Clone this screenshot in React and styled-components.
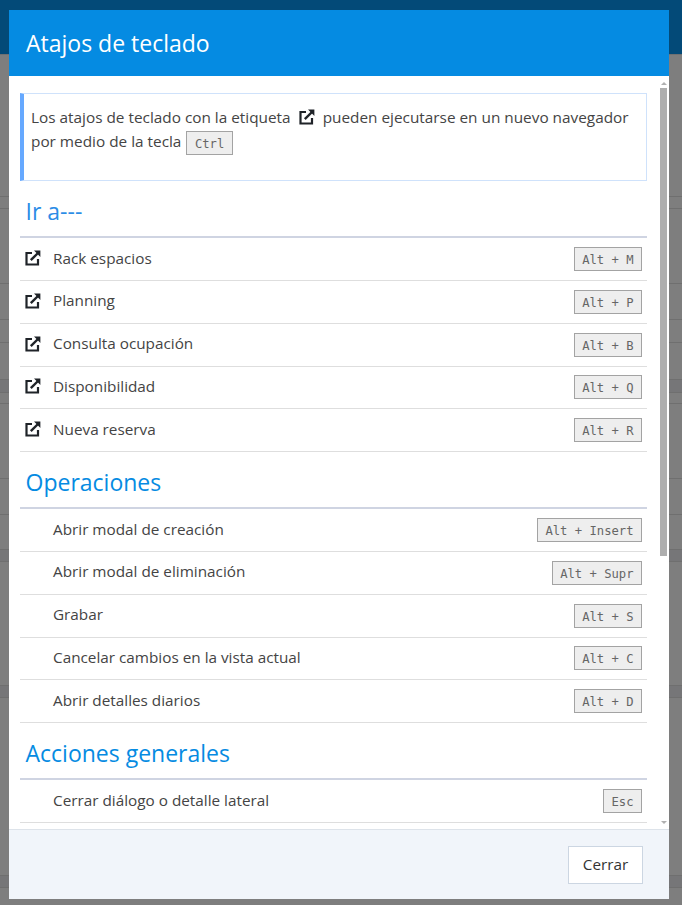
import styled, { createGlobalStyle } from "styled-components";

const GlobalStyle = createGlobalStyle`
  * {
    box-sizing: border-box;
  }

  html,
  body {
    margin: 0;
    height: 100%;
    background: #7e7e7e;
    overflow: hidden;
    font-family: "Open Sans", "Noto Sans", sans-serif;
  }
`;

const Page = styled.div`
  position: relative;
  width: 682px;
  height: 905px;
  overflow: hidden;
`;

const Backdrop = styled.div`
  display: flex;
  flex-direction: column;
`;

const TopBar = styled.div`
  height: 55px;
  background: #034a78;
  border-bottom: 1px solid #6f7072;
`;

const BackRow = styled.div`
  height: ${({ $height }) => $height}px;
  background: ${({ $band }) => ($band ? "#767678" : "transparent")};
  border-bottom: 1px solid #6f6f6f;
`;

const Dialog = styled.div`
  position: absolute;
  top: 10px;
  left: 9px;
  width: 660px;
  height: 889px;
  display: flex;
  flex-direction: column;
  background: #fff;
`;

const Header = styled.header`
  height: 66px;
  flex: none;
  display: flex;
  align-items: center;
  padding: 0 17px;
  background: #058be2;
`;

const Title = styled.h1`
  margin: 0;
  font-size: 23px;
  font-weight: 400;
  color: #fff;
`;

const Body = styled.div`
  position: relative;
  flex: 1;
  min-height: 0;
  overflow: hidden;
  padding: 17px 0 0 11px;
`;

const Rail = styled.div`
  position: absolute;
  top: 0;
  right: 0;
  bottom: 0;
  width: 9px;
  display: flex;
  flex-direction: column;
  background: #fff;
`;

const RailArrow = styled.div`
  height: 12px;
  flex: none;
  display: flex;
  justify-content: center;
  align-items: ${({ $down }) => ($down ? "flex-end" : "flex-start")};
  padding: ${({ $down }) => ($down ? "0 2px 5px 0" : "6px 2px 0 0")};
  margin-top: ${({ $down }) => ($down ? "auto" : "0")};

  &::before {
    content: "";
    border-left: 3px solid transparent;
    border-right: 3px solid transparent;
    border-top: ${({ $down }) => ($down ? "3px solid #b0b0b0" : "0")};
    border-bottom: ${({ $down }) => ($down ? "0" : "3px solid #b0b0b0")};
  }
`;

const RailThumb = styled.div`
  width: 7px;
  height: 468px;
  flex: none;
  background: #aeaeae;
`;

const Content = styled.div`
  width: 627px;
`;

const Notice = styled.div`
  height: 88px;
  padding: 11px 8px 0 7px;
  border: 1px solid #cfe2fb;
  border-left: 4px solid #66a9ff;
  font-size: 15.35px;
  line-height: 24px;
  color: #444;
`;

const SectionTitle = styled.h2`
  height: 57.25px;
  margin: 0;
  padding: 0 0 7px 5.5px;
  display: flex;
  align-items: flex-end;
  border-bottom: 2px solid #cfd4e2;
  font-size: 23px;
  font-weight: 400;
  line-height: 36px;
  color: ${({ $first }) => ($first ? "#2b8ce6" : "#058be2")};
`;

const Row = styled.div`
  height: 42.75px;
  display: flex;
  align-items: center;
  padding: 0 5px 0 5px;
  border-bottom: 1px solid #dedede;
`;

const IconSlot = styled.span`
  width: 28px;
  flex: none;
  display: flex;
  margin-bottom: 2px;
  color: #1f2328;
`;

const Label = styled.span`
  flex: 1;
  padding-bottom: 3px;
  font-size: 15.3px;
  color: #444;
`;

const Key = styled.kbd`
  display: inline-block;
  height: 24px;
  padding: 0 7.5px;
  vertical-align: middle;
  background: #eee;
  border: 1px solid #a3a3a3;
  font-family: "DejaVu Sans Mono", "Liberation Mono", monospace;
  font-size: 12.2px;
  line-height: 24px;
  color: #666;
`;

const NoticeKey = styled(Key)`
  margin-left: 1px;
`;

const InlineIcon = styled.span`
  display: inline-flex;
  margin: 0 8px;
  vertical-align: -2px;
  color: #1f2328;
`;

const Footer = styled.footer`
  height: 70px;
  flex: none;
  display: flex;
  align-items: center;
  justify-content: flex-end;
  padding: 0 26px 0 0;
  background: #f1f5fa;
  border-top: 1px solid #dde3ea;
`;

const CloseButton = styled.button`
  width: 75px;
  height: 38px;
  padding: 0 0 2px;
  background: #fff;
  border: 1px solid #ccd6e2;
  font-family: inherit;
  font-size: 15.3px;
  color: #333;
`;

const backRows = [
  { height: 142 },
  { height: 12 },
  { height: 75 },
  { height: 36 },
  { height: 23 },
  { height: 37 },
  { height: 13, band: true },
  { height: 11 },
  { height: 75 },
  { height: 36 },
  { height: 35 },
  { height: 12, band: true },
  { height: 124 },
  { height: 12, band: true },
  { height: 178 },
  { height: 12, band: true },
];

const sections = [
  {
    title: "Ir a---",
    external: true,
    items: [
      ["Rack espacios", "Alt + M"],
      ["Planning", "Alt + P"],
      ["Consulta ocupación", "Alt + B"],
      ["Disponibilidad", "Alt + Q"],
      ["Nueva reserva", "Alt + R"],
    ],
  },
  {
    title: "Operaciones",
    items: [
      ["Abrir modal de creación", "Alt + Insert"],
      ["Abrir modal de eliminación", "Alt + Supr"],
      ["Grabar", "Alt + S"],
      ["Cancelar cambios en la vista actual", "Alt + C"],
      ["Abrir detalles diarios", "Alt + D"],
    ],
  },
  {
    title: "Acciones generales",
    items: [["Cerrar diálogo o detalle lateral", "Esc"]],
  },
];

const ExternalIcon = () => (
  <svg width="16" height="16" viewBox="0 0 16 16" fill="none">
    <path d="M7 3H1.5v11.5H13V9" stroke="currentColor" strokeWidth="2.2" />
    <path d="M5.8 10.2 13 3" stroke="currentColor" strokeWidth="2.4" />
    <path d="M9 .6h6.4V7z" fill="currentColor" />
  </svg>
);

const App = () => {
  return (
    <Page>
      <GlobalStyle />
      <Backdrop>
        <TopBar />
        {backRows.map((row, i) => (
          <BackRow key={i} $height={row.height} $band={row.band} />
        ))}
      </Backdrop>

      <Dialog>
        <Header>
          <Title>Atajos de teclado</Title>
        </Header>
        <Body>
          <Content>
            <Notice>
              Los atajos de teclado con la etiqueta
              <InlineIcon>
                <ExternalIcon />
              </InlineIcon>
              pueden ejecutarse en un nuevo navegador por medio de la tecla <NoticeKey>Ctrl</NoticeKey>
            </Notice>
            {sections.map((section, i) => (
              <section key={section.title}>
                <SectionTitle $first={i === 0}>{section.title}</SectionTitle>
                {section.items.map(([label, keys]) => (
                  <Row key={label}>
                    <IconSlot>
                      {section.external && <ExternalIcon />}
                    </IconSlot>
                    <Label>{label}</Label>
                    <Key>{keys}</Key>
                  </Row>
                ))}
              </section>
            ))}
          </Content>
          <Rail>
            <RailArrow />
            <RailThumb />
            <RailArrow $down />
          </Rail>
        </Body>
        <Footer>
          <CloseButton>Cerrar</CloseButton>
        </Footer>
      </Dialog>
    </Page>
  );
};

export default App;
